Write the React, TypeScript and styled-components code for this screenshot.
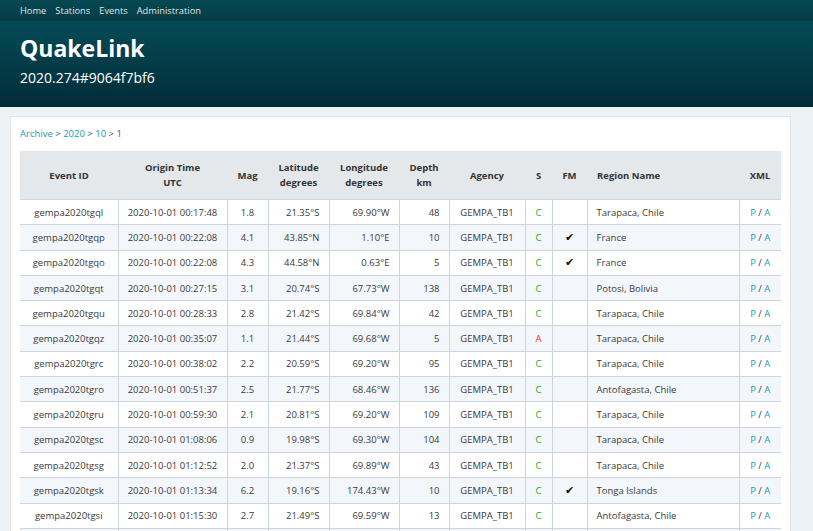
import React from 'react'
import styled, { createGlobalStyle } from 'styled-components'

const GlobalStyle = createGlobalStyle`
  html, body {
    margin: 0;
    padding: 0;
    background: #edf2f6;
    font-family: "Open Sans", "Noto Sans", sans-serif;
    color: #333;
  }
`

type Quake = {
  id: string
  time: string
  mag: string
  lat: string
  lon: string
  depth: string
  status: 'C' | 'A'
  fm?: boolean
  region: string
}

const events: Quake[] = [
  { id: 'gempa2020tgql', time: '2020-10-01 00:17:48', mag: '1.8', lat: '21.35°S', lon: '69.90°W', depth: '48', status: 'C', region: 'Tarapaca, Chile' },
  { id: 'gempa2020tgqp', time: '2020-10-01 00:22:08', mag: '4.1', lat: '43.85°N', lon: '1.10°E', depth: '10', status: 'C', fm: true, region: 'France' },
  { id: 'gempa2020tgqo', time: '2020-10-01 00:22:08', mag: '4.3', lat: '44.58°N', lon: '0.63°E', depth: '5', status: 'C', fm: true, region: 'France' },
  { id: 'gempa2020tgqt', time: '2020-10-01 00:27:15', mag: '3.1', lat: '20.74°S', lon: '67.73°W', depth: '138', status: 'C', region: 'Potosi, Bolivia' },
  { id: 'gempa2020tgqu', time: '2020-10-01 00:28:33', mag: '2.8', lat: '21.42°S', lon: '69.84°W', depth: '42', status: 'C', region: 'Tarapaca, Chile' },
  { id: 'gempa2020tgqz', time: '2020-10-01 00:35:07', mag: '1.1', lat: '21.44°S', lon: '69.68°W', depth: '5', status: 'A', region: 'Tarapaca, Chile' },
  { id: 'gempa2020tgrc', time: '2020-10-01 00:38:02', mag: '2.2', lat: '20.59°S', lon: '69.20°W', depth: '95', status: 'C', region: 'Tarapaca, Chile' },
  { id: 'gempa2020tgro', time: '2020-10-01 00:51:37', mag: '2.5', lat: '21.77°S', lon: '68.46°W', depth: '136', status: 'C', region: 'Antofagasta, Chile' },
  { id: 'gempa2020tgru', time: '2020-10-01 00:59:30', mag: '2.1', lat: '20.81°S', lon: '69.20°W', depth: '109', status: 'C', region: 'Tarapaca, Chile' },
  { id: 'gempa2020tgsc', time: '2020-10-01 01:08:06', mag: '0.9', lat: '19.98°S', lon: '69.30°W', depth: '104', status: 'C', region: 'Tarapaca, Chile' },
  { id: 'gempa2020tgsg', time: '2020-10-01 01:12:52', mag: '2.0', lat: '21.37°S', lon: '69.89°W', depth: '43', status: 'C', region: 'Tarapaca, Chile' },
  { id: 'gempa2020tgsk', time: '2020-10-01 01:13:34', mag: '6.2', lat: '19.16°S', lon: '174.43°W', depth: '10', status: 'C', fm: true, region: 'Tonga Islands' },
  { id: 'gempa2020tgsi', time: '2020-10-01 01:15:30', mag: '2.7', lat: '21.49°S', lon: '69.59°W', depth: '13', status: 'C', region: 'Antofagasta, Chile' },
  { id: 'gempa2020tgsm', time: '2020-10-01 01:21:44', mag: '3.0', lat: '20.12°S', lon: '69.05°W', depth: '98', status: 'C', region: 'Tarapaca, Chile' },
]

type Align = 'left' | 'center' | 'right'

const columns: { title: React.ReactNode; width: number; align: Align; headAlign?: Align }[] = [
  { title: 'Event ID', width: 98, align: 'center' },
  { title: <>Origin Time<br />UTC</>, width: 109, align: 'center' },
  { title: 'Mag', width: 41, align: 'center' },
  { title: <>Latitude<br />degrees</>, width: 61, align: 'right', headAlign: 'center' },
  { title: <>Longitude<br />degrees</>, width: 70, align: 'right', headAlign: 'center' },
  { title: <>Depth<br />km</>, width: 50, align: 'right', headAlign: 'center' },
  { title: 'Agency', width: 76, align: 'center' },
  { title: 'S', width: 27, align: 'center' },
  { title: 'FM', width: 35, align: 'center' },
  { title: 'Region Name', width: 152, align: 'left' },
  { title: 'XML', width: 42, align: 'center' },
]

const NavBar = styled.nav`
  height: 21px;
  background: linear-gradient(#064852, #053c47);
  display: flex;
  align-items: center;
  padding: 0 20px;
  gap: 9px;
`

const NavLink = styled.a`
  color: #dfe7e9;
  font-size: 9.3px;
  text-decoration: none;
  line-height: 1;
`

const Banner = styled.header`
  height: 86px;
  background: linear-gradient(#044b56 0%, #043f4a 40%, #022c38 100%);
  padding: 0 20px 4px;
  box-sizing: border-box;
  display: flex;
  flex-direction: column;
  justify-content: center;
  color: #fff;
`

const Title = styled.h1`
  margin: 0;
  font-size: 23px;
  font-weight: 700;
  line-height: 30px;
`

const Subtitle = styled.div`
  font-size: 14px;
  line-height: 20px;
  margin-top: 5px;
  margin-bottom: 3px;
`

const Card = styled.main`
  margin: 9px 22px 0 10px;
  background: #fff;
  border: 1px solid #e2e5e8;
  border-bottom: none;
  padding: 11px 9px 0 9px;
`

const Crumbs = styled.div`
  font-size: 9.5px;
  color: #555;
  line-height: 12px;
  margin-bottom: 11px;
`

const Crumb = styled.a`
  color: #1b9cb4;
  text-decoration: none;
`

const Table = styled.table`
  width: 761px;
  border-collapse: collapse;
  table-layout: fixed;
  font-size: 9.5px;
`

const Head = styled.th<{ $align: Align }>`
  background: #e4e8eb;
  font-weight: 700;
  color: #333;
  height: 48px;
  padding: 0 10px;
  text-align: ${p => p.$align};
  line-height: 15px;
  border-bottom: 1px solid #ccd4dd;
`

const Row = styled.tr<{ $striped: boolean }>`
  background: ${p => (p.$striped ? '#f3f7fb' : '#fff')};
`

const Cell = styled.td<{ $align: Align }>`
  height: 24.3px;
  padding: 0 9px;
  text-align: ${p => p.$align};
  border-bottom: 1px solid #ccd4dd;
  white-space: nowrap;
  overflow: hidden;
  color: #3a3a3a;

  & + & {
    border-left: 1px solid #ccd4dd;
  }
`

const Status = styled.span<{ $auto: boolean }>`
  color: ${p => (p.$auto ? '#e33' : '#2a2')};
`

const Check = styled.span`
  font-family: "DejaVu Sans", sans-serif;
  font-size: 11px;
  color: #111;
`

const Xml = styled.a`
  color: #1b9cb4;
  text-decoration: none;
`

export default function App() {
  return (
    <>
      <GlobalStyle />
      <NavBar>
        <NavLink href="#">Home</NavLink>
        <NavLink href="#">Stations</NavLink>
        <NavLink href="#">Events</NavLink>
        <NavLink href="#">Administration</NavLink>
      </NavBar>
      <Banner>
        <Title>QuakeLink</Title>
        <Subtitle>2020.274#9064f7bf6</Subtitle>
      </Banner>
      <Card>
        <Crumbs>
          <Crumb href="#">Archive</Crumb> &gt; <Crumb href="#">2020</Crumb> &gt; <Crumb href="#">10</Crumb> &gt; 1
        </Crumbs>
        <Table>
          <colgroup>
            {columns.map((c, i) => (
              <col key={i} style={{ width: c.width }} />
            ))}
          </colgroup>
          <thead>
            <tr>
              {columns.map((c, i) => (
                <Head key={i} $align={c.headAlign ?? c.align}>{c.title}</Head>
              ))}
            </tr>
          </thead>
          <tbody>
            {events.map((e, i) => (
              <Row key={e.id} $striped={i % 2 === 1}>
                <Cell $align="center">{e.id}</Cell>
                <Cell $align="center">{e.time}</Cell>
                <Cell $align="center">{e.mag}</Cell>
                <Cell $align="right">{e.lat}</Cell>
                <Cell $align="right">{e.lon}</Cell>
                <Cell $align="right">{e.depth}</Cell>
                <Cell $align="center">GEMPA_TB1</Cell>
                <Cell $align="center"><Status $auto={e.status === 'A'}>{e.status}</Status></Cell>
                <Cell $align="center">{e.fm ? <Check>✔</Check> : null}</Cell>
                <Cell $align="left">{e.region}</Cell>
                <Cell $align="center">
                  <Xml href="#">P</Xml> / <Xml href="#">A</Xml>
                </Cell>
              </Row>
            ))}
          </tbody>
        </Table>
      </Card>
    </>
  )
}
